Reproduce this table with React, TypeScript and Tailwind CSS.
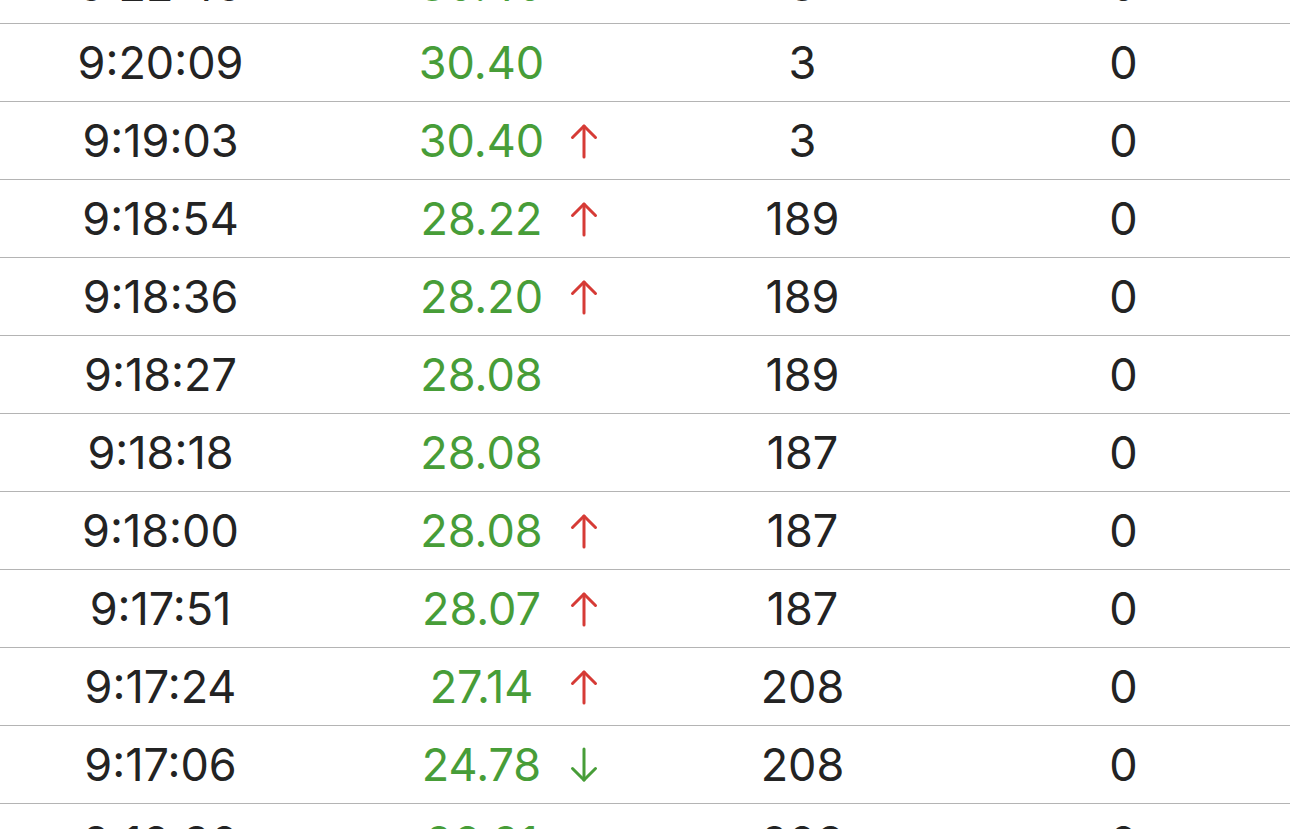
type Trend = "up" | "down" | null;

interface Tick {
  time: string;
  price: string;
  trend: Trend;
  volume: string;
  last: string;
}

const ticks: Tick[] = [
  { time: "9:22:49", price: "30.40", trend: null, volume: "3", last: "0" },
  { time: "9:20:09", price: "30.40", trend: null, volume: "3", last: "0" },
  { time: "9:19:03", price: "30.40", trend: "up", volume: "3", last: "0" },
  { time: "9:18:54", price: "28.22", trend: "up", volume: "189", last: "0" },
  { time: "9:18:36", price: "28.20", trend: "up", volume: "189", last: "0" },
  { time: "9:18:27", price: "28.08", trend: null, volume: "189", last: "0" },
  { time: "9:18:18", price: "28.08", trend: null, volume: "187", last: "0" },
  { time: "9:18:00", price: "28.08", trend: "up", volume: "187", last: "0" },
  { time: "9:17:51", price: "28.07", trend: "up", volume: "187", last: "0" },
  { time: "9:17:24", price: "27.14", trend: "up", volume: "208", last: "0" },
  { time: "9:17:06", price: "24.78", trend: "down", volume: "208", last: "0" },
  { time: "9:16:30", price: "26.21", trend: null, volume: "208", last: "0" },
];

function Arrow({ dir }: { dir: "up" | "down" }) {
  const up = dir === "up";
  return (
    <svg
      width="28"
      height="36"
      viewBox="0 0 28 36"
      fill="none"
      stroke="currentColor"
      strokeWidth="3"
      strokeLinecap="round"
      strokeLinejoin="round"
      className={up ? "text-[#d63b36]" : "text-[#479d38]"}
    >
      {up ? (
        <>
          <path d="M14 3 V34" />
          <path d="M2.5 14.5 L14 3 L25.5 14.5" />
        </>
      ) : (
        <>
          <path d="M14 2 V33" />
          <path d="M2.5 21.5 L14 33 L25.5 21.5" />
        </>
      )}
    </svg>
  );
}

export default function App() {
  return (
    <div className="h-[829px] w-[1290px] overflow-hidden bg-white font-['Inter','Liberation_Sans',Arial,sans-serif] text-[45px] text-[#232323]">
      <div className="-mt-[54px]">
        {ticks.map((t, i) => (
          <div
            key={i}
            className="grid h-[78px] grid-cols-4 items-center border-b border-[#b4b4b4] pr-[6px] leading-none"
          >
            <div className="text-center">{t.time}</div>
            <div className="relative text-center text-[#479d38]">
              {t.price}
              {t.trend && (
                <span className="absolute top-1/2 left-[calc(50%+88px)] -translate-y-1/2">
                  <Arrow dir={t.trend} />
                </span>
              )}
            </div>
            <div className="text-center">{t.volume}</div>
            <div className="text-center">{t.last}</div>
          </div>
        ))}
      </div>
    </div>
  );
}
